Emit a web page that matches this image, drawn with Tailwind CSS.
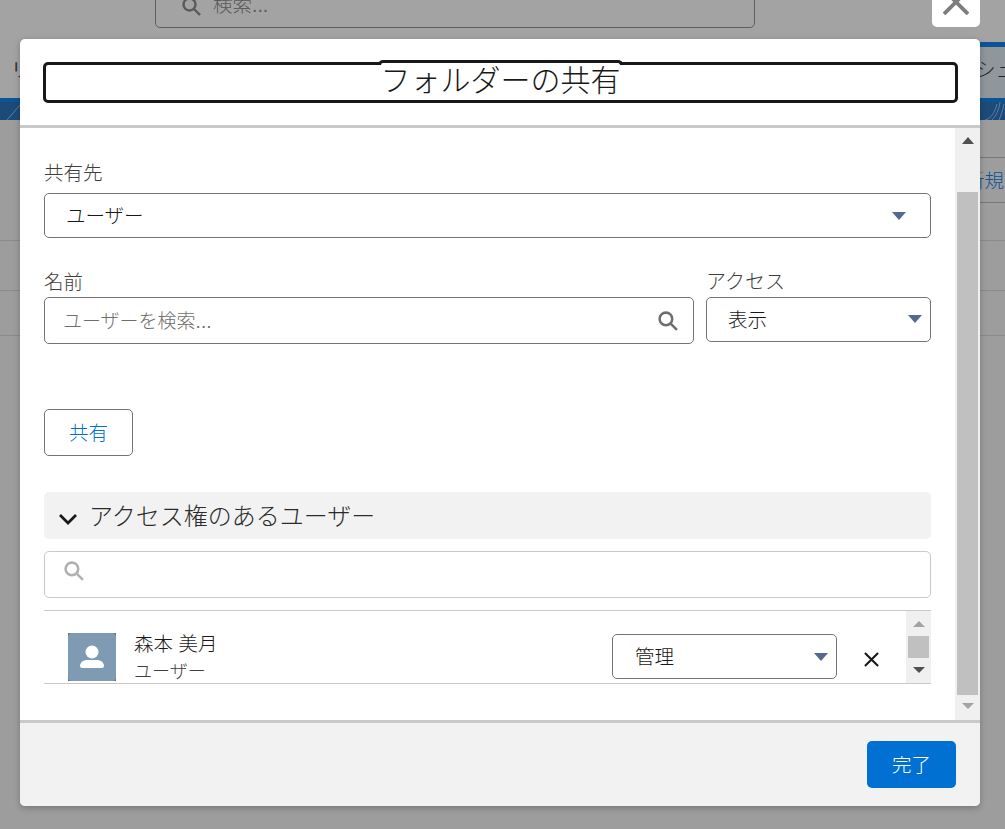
<!DOCTYPE html>
<html lang="ja">
<head>
<meta charset="UTF-8" />
<title>フォルダーの共有</title>
<script src="https://cdn.jsdelivr.net/npm/@tailwindcss/browser@4"></script>
</head>
<body class="relative w-[1005px] h-[829px] overflow-hidden bg-[#9d9d9d] font-light font-['Liberation_Sans','Noto_Sans_CJK_JP',sans-serif] text-[#181818]">

<!-- page behind the dimmed overlay -->
<div class="absolute inset-0 overflow-hidden">
  <div class="absolute left-0 top-0 w-full h-[98px] bg-[#a3a3a3]"></div>
  <div class="absolute left-[155px] top-[-20px] w-[600px] h-[48px] rounded-[5px] border border-[#5f5f5f] flex items-center pl-[25px] gap-[12px] text-[#5a5a5a] text-[19.5px]">
    <svg class="w-[20px] h-[20px] mt-[3px]" viewBox="0 0 20 20" fill="none" stroke="#5a5a5a" stroke-width="2.4"><circle cx="8.5" cy="8.5" r="6"/><path d="M13 13l6 6"/></svg>
    <span class="mt-[4px]">検索...</span>
  </div>
  <div class="absolute left-[932px] top-[-10px] w-[48px] h-[37px] bg-white rounded-[5px]">
    <svg class="absolute left-[11px] top-[-1px] w-[26px] h-[26px]" viewBox="0 0 26 26" stroke="#7d7d7d" stroke-width="3.8" fill="none"><path d="M1 1l24 24M25 1L1 25"/></svg>
  </div>
  <div class="absolute left-[11px] top-[56px] text-[19.5px] font-normal text-[#333]">リ</div>
  <div class="absolute left-[980px] top-[42px] w-[25px] h-[5px] bg-[#0b5596]"></div>
  <div class="absolute left-[980px] top-[47px] w-[25px] h-[51px] bg-[#8f969c]"></div>
  <div class="absolute left-[976px] top-[56px] text-[19.5px] text-[#222] whitespace-nowrap">シュ</div>
  <div class="absolute left-0 top-[98px] w-full h-[4px] bg-[#0b5596]"></div>
  <div class="absolute left-0 top-[102px] w-full h-[18px] bg-[#1d4a78]"></div>
  <svg class="absolute left-0 top-[98px] w-[1005px] h-[22px]" viewBox="0 0 1005 22" fill="none" stroke="#5b7fa3" stroke-width="1">
    <path d="M7 22L20 7"/>
    <path d="M985 22c6-1 10-8 12-16M992 22c4-4 7-10 8-18M999 22c2-5 4-10 5-16"/>
  </svg>
  <div class="absolute left-[980px] top-[157px] w-[25px] h-px bg-[#777]"></div>
  <div class="absolute left-[965px] top-[167px] text-[19.5px] text-[#0b5596] whitespace-nowrap">新規</div>
  <div class="absolute left-[980px] top-[202px] w-[25px] h-px bg-[#777]"></div>
  <div class="absolute left-0 top-[240px] w-full h-px bg-[#8a8a8a]"></div>
  <div class="absolute left-0 top-[290px] w-full h-px bg-[#8a8a8a]"></div>
  <div class="absolute left-0 top-[335px] w-full h-px bg-[#8a8a8a]"></div>
</div>

<!-- modal -->
<div class="absolute left-[20px] top-[39px] w-[960px] h-[767px] flex flex-col rounded-[5px] bg-white shadow-[0_2px_6px_rgba(0,0,0,0.25)] overflow-hidden">
  <header class="h-[89px] shrink-0 border-b-[3px] border-[#c9c9c9] pt-[23px] px-[23px]">
    <div class="relative h-[41px] w-[915px] border-[3px] border-[#181818] rounded-[5px]">
      <div class="absolute left-[332px] top-[-5px] h-[5px] w-[245px] border-t-[3px] border-x-[3px] border-[#181818] bg-white rounded-t-[5px]"></div>
      <h2 class="absolute inset-x-0 top-[-3px] text-center text-[30px] leading-[38px] font-light">フォルダーの共有</h2>
    </div>
  </header>

  <div class="flex-1 flex min-h-0">
    <main class="w-[935px] px-[24px] pt-[33px]">
      <label class="block text-[19.5px] leading-[24px] text-[#3e3e3c]">共有先</label>
      <div class="mt-[8px] h-[45px] rounded-[5px] border border-[#747474] flex items-center justify-between pl-[21px] pr-[24px] text-[19.5px]">
        <span class="mt-[2px]">ユーザー</span>
        <span class="w-0 h-0 mt-[1px] border-x-[7px] border-x-transparent border-t-[8px] border-t-[#54698d]"></span>
      </div>

      <div class="mt-[30px] flex gap-[12px]">
        <div class="w-[650px]">
          <label class="block text-[19.5px] leading-[24px] mt-[2px] mb-[-2px] text-[#3e3e3c]">名前</label>
          <div class="mt-[5px] h-[47px] rounded-[5px] border border-[#747474] flex items-center justify-between pl-[18px] pr-[15px] text-[19px] text-[#706e6b]">
            <span class="mt-[3px]">ユーザーを検索...</span>
            <svg class="w-[21px] h-[21px]" viewBox="0 0 20 20" fill="none" stroke="#706e6b" stroke-width="2.4"><circle cx="8.5" cy="8.5" r="6"/><path d="M13 13l6 6"/></svg>
          </div>
        </div>
        <div class="w-[225px]">
          <label class="block text-[20px] leading-[24px] mt-[2px] mb-[-2px] text-[#3e3e3c]">アクセス</label>
          <div class="mt-[5px] h-[45px] rounded-[5px] border border-[#747474] flex items-center justify-between pl-[21px] pr-[8px] text-[19.5px]">
            <span class="mt-[3px]">表示</span>
            <span class="w-0 h-0 mb-[1px] border-x-[7px] border-x-transparent border-t-[8px] border-t-[#54698d]"></span>
          </div>
        </div>
      </div>

      <button class="mt-[65px] block w-[89px] h-[47px] pt-[2px] rounded-[5px] border border-[#747474] bg-white text-[#0070d2] text-[19.5px] font-light">共有</button>

      <section class="mt-[36px] h-[47px] rounded-[5px] bg-[#f2f2f2] flex items-center pl-[14px] gap-[11px]">
        <svg class="w-[20px] h-[20px] mt-[8px]" viewBox="0 0 20 20" fill="none" stroke="#181818" stroke-width="2.7"><path d="M2 5l8 8 8-8"/></svg>
        <span class="text-[24px] mt-[2px] text-[#2b2b2b]">アクセス権のあるユーザー</span>
      </section>

      <div class="mt-[12px] h-[47px] rounded-[5px] border border-[#c9c9c9] pl-[18px] pt-[8px]">
        <svg class="w-[21px] h-[21px]" viewBox="0 0 20 20" fill="none" stroke="#b0b0b0" stroke-width="2.4"><circle cx="8.5" cy="8.5" r="6"/><path d="M13 13l6 6"/></svg>
      </div>

      <div class="mt-[12px] h-[74px] border-y border-[#c9c9c9] flex">
        <div class="flex-1 flex pl-[24px] pt-[22px]">
          <div class="w-[48px] h-[48px] bg-[#6e6e6e]">
            <div class="w-full h-full rounded-[4px] bg-[#7f9ab3] flex items-center justify-center">
              <svg class="w-[28px] h-[28px]" viewBox="0 0 28 28" fill="white"><circle cx="14" cy="9" r="6.5"/><path d="M2 23c0-4 4-6 7-6h10c3 0 7 2 7 6 0 1-1 2-2 2H4c-1 0-2-1-2-2z"/></svg>
            </div>
          </div>
          <div class="ml-[18px] mt-[-2px]">
            <div class="text-[19.5px] leading-[26px] text-[#181818]">森本 美月</div>
            <div class="text-[18px] leading-[28px] mt-[1px] text-[#3e3e3c]">ユーザー</div>
          </div>
          <div class="ml-auto mt-[1px] w-[225px] h-[45px] rounded-[5px] border border-[#747474] bg-white flex items-center justify-between pl-[22px] pr-[8px] text-[19.5px]">
            <span class="mt-[3px]">管理</span>
            <span class="w-0 h-0 border-x-[7px] border-x-transparent border-t-[8px] border-t-[#54698d]"></span>
          </div>
          <svg class="w-[15px] h-[15px] ml-[27px] mr-[27px] mt-[19px]" viewBox="0 0 16 16" stroke="#181818" stroke-width="2.2" fill="none"><path d="M1 1l14 14M15 1L1 15"/></svg>
        </div>
        <div class="w-[25px] bg-[#f0f0f0] flex flex-col items-center">
          <span class="mt-[10px] w-0 h-0 border-x-[6px] border-x-transparent border-b-[6px] border-b-[#a3a3a3]"></span>
          <span class="mt-[9px] w-[21px] h-[22px] bg-[#c0c0c0]"></span>
          <span class="mt-[9px] w-0 h-0 border-x-[6px] border-x-transparent border-t-[6px] border-t-[#505050]"></span>
        </div>
      </div>
    </main>

    <aside class="w-[25px] bg-[#f0f0f0] flex flex-col items-center">
      <span class="mt-[9px] w-0 h-0 border-x-[6px] border-x-transparent border-b-[7px] border-b-[#505050]"></span>
      <span class="mt-[48px] w-[21px] h-[503px] bg-[#c0c0c0]"></span>
      <span class="mt-[8px] w-0 h-0 border-x-[6px] border-x-transparent border-t-[6px] border-t-[#a3a3a3]"></span>
    </aside>
  </div>

  <footer class="h-[86px] shrink-0 border-t-[3px] border-[#c9c9c9] bg-[#f2f2f2] flex justify-end items-start pt-[18px] pr-[24px]">
    <button class="w-[89px] h-[47px] pt-[2px] rounded-[5px] bg-[#0070d2] text-white text-[19.5px] font-light">完了</button>
  </footer>
</div>
</body>
</html>
